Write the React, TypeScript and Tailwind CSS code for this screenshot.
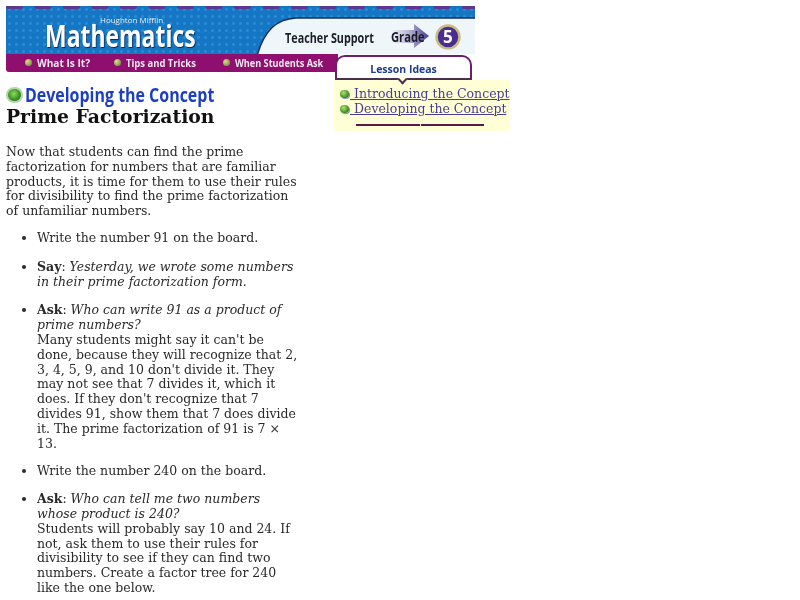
const serif = "font-['DejaVu_Serif','Liberation_Serif',serif]";
const display = "font-['Open_Sans','Liberation_Sans',sans-serif]";

function NavDot() {
  return <span className="h-[7px] w-[7px] shrink-0 rounded-full bg-[radial-gradient(circle_at_35%_35%,#d8dc8c,#6b7a2a)]" />;
}

function GreenBullet() {
  return <span className="h-[8px] w-[9px] shrink-0 rounded-full bg-[radial-gradient(circle_at_40%_35%,#b8e070,#2f8a20_70%)] shadow-[1px_1px_0_#8f8fb0]" />;
}

function HeaderArt() {
  return (
    <svg className="absolute inset-0" width="469" height="48" viewBox="0 0 469 48">
      <defs>
        <linearGradient id="arrowFill" x1="0" x2="1" y1="0" y2="0">
          <stop offset="0" stopColor="#f2f8fa" />
          <stop offset="0.45" stopColor="#b9b6d8" />
          <stop offset="1" stopColor="#4a3f8f" />
        </linearGradient>
      </defs>
      <path d="M251 50 C258 25 270 13 290 12 L472 12 L472 50 Z" fill="#eef6fa" stroke="#10305c" strokeWidth="1.5" />
      {Array.from({ length: 17 }).map((_, i) => (
        <rect key={i} x={i * 28.5} y="-2" width="17" height="5" rx="2" fill="#5a3a90" />
      ))}
      {/* grade arrow */}
      <path d="M385 24 H408 V18 L423 30 L408 42 V37 H385 Z" fill="url(#arrowFill)" />
      <circle cx="442" cy="31" r="11.5" fill="#4a2d8c" stroke="#c9bd86" strokeWidth="2.5" />
    </svg>
  );
}

function LessonIdeas() {
  return (
    <div className="absolute left-[334px] top-[55px] w-[176px]">
      <div className="relative ml-[1px] flex h-[25px] w-[137px] items-center justify-center rounded-t-[10px] border-2 border-x-[#6a1f6a] border-t-[#6a1f6a] border-b-[#4a3050] bg-white pt-[4px]">
        <span className={`${display} text-[10.5px] font-bold text-[#1f3a8a]`}>Lesson Ideas</span>
      </div>
      <div className="absolute left-[65px] top-[21px] h-[7px] w-[7px] rotate-45 border-r-2 border-b-2 border-[#4a3050] bg-[#ffffd6]" />
      <div className={`${serif} h-[51px] bg-[#ffffd6] pl-[6px] pt-[6px] text-[12.5px] leading-[15px] whitespace-nowrap text-[#4a3f8f]`}>
        <div className="flex items-center gap-[1px]">
          <GreenBullet />
          <a className="underline">&nbsp;Introducing the Concept</a>
        </div>
        <div className="flex items-center gap-[1px]">
          <GreenBullet />
          <a className="underline">&nbsp;Developing the Concept</a>
        </div>
        <div className="ml-[16px] mt-[8px] flex h-[2px] w-[128px] gap-px">
          <div className="flex-1 bg-[#5a1848]" />
          <div className="flex-1 bg-[#5a1848]" />
        </div>
      </div>
    </div>
  );
}

function Header() {
  return (
    <header className="relative h-[66px] w-[469px]">
      <div className="relative h-[48px] overflow-hidden bg-[#1577c4] bg-[radial-gradient(#2a8ad8_1px,transparent_2px)] bg-[length:7px_7px]">
        <HeaderArt />
        <span className={`${display} absolute left-[94px] top-[8px] text-[8px] leading-[12px] text-[#e8f0f8]`}>Houghton Mifflin</span>
        <span className={`${display} absolute left-[39px] top-[11px] origin-left scale-x-[0.74] text-[31px] leading-[36px] font-bold whitespace-nowrap text-white [text-shadow:1px_1px_1px_#0b2a55]`}>
          Mathematics
        </span>
        <span className={`${display} absolute left-[279px] top-[21px] origin-left scale-x-[0.72] text-[15px] leading-[20px] font-bold whitespace-nowrap text-[#1c1c28]`}>
          Teacher Support
        </span>
        <span className={`${display} absolute left-[385px] top-[21px] origin-left scale-x-[0.8] text-[14px] leading-[20px] font-bold text-[#1c1c28]`}>
          Grade
        </span>
        <span className={`${display} absolute left-[437px] top-[20px] text-[17px] leading-[22px] font-bold text-white`}>5</span>
      </div>
      <nav className={`${display} flex h-[18px] w-[332px] items-center rounded-b-[3px] bg-[#8e0f6e] pl-[19px] text-[10.5px] font-bold whitespace-nowrap text-[#f0e8f0]`}>
        <div className="flex w-[89px] items-center gap-[5px]"><NavDot /><span className="origin-left scale-x-[0.96]">What Is It?</span></div>
        <div className="flex w-[109px] items-center gap-[5px]"><NavDot /><span className="origin-left scale-x-[0.9]">Tips and Tricks</span></div>
        <div className="flex items-center gap-[5px]"><NavDot /><span className="origin-left scale-x-[0.87]">When Students Ask</span></div>
      </nav>
    </header>
  );
}

export default function App() {
  return (
    <div className={`${serif} relative h-[600px] w-[800px] overflow-hidden bg-white px-[6px] pt-[6px] text-[12.5px] leading-[14.8px] text-[#2a2a2a] blur-[0.4px]`}>
      <Header />
      <LessonIdeas />

      <div className="mt-[12px] flex items-center gap-[2px]">
        <span className="h-[16px] w-[17px] shrink-0 rounded-full border-2 border-[#b5d6a8] bg-[radial-gradient(circle_at_45%_40%,#8fdc50,#1f7a20_75%)]" />
        <span className={`${display} origin-left scale-x-[0.84] text-[19px] leading-[22px] font-bold whitespace-nowrap text-[#1c3fc0]`}>
          Developing the Concept
        </span>
      </div>
      <h1 className="text-[18.8px] leading-[21px] font-bold text-[#111]">Prime Factorization</h1>

      <p className="mt-[18px] w-[296px]">
        Now that students can find the prime factorization for numbers that are familiar products, it is time for them to use their rules for divisibility to find the prime factorization of unfamiliar numbers.
      </p>

      <ul className="mt-[12px] w-[295px] list-disc pl-[31px]">
        <li>Write the number 91 on the board.</li>
        <li className="mt-[14px]">
          <b>Say</b>: <i>Yesterday, we wrote some numbers in their prime factorization form.</i>
        </li>
        <li className="mt-[14px]">
          <b>Ask</b>: <i>Who can write 91 as a product of prime numbers?</i>
          <br />
          Many students might say it can't be done, because they will recognize that 2, 3, 4, 5, 9, and 10 don't divide it. They may not see that 7 divides it, which it does. If they don't recognize that 7 divides 91, show them that 7 does divide it. The prime factorization of 91 is 7 × 13.
        </li>
        <li className="mt-[13px]">Write the number 240 on the board.</li>
        <li className="mt-[13px]">
          <b>Ask</b>: <i>Who can tell me two numbers whose product is 240?</i>
          <br />
          Students will probably say 10 and 24. If not, ask them to use their rules for divisibility to see if they can find two numbers. Create a factor tree for 240 like the one below.
        </li>
      </ul>
    </div>
  );
}
